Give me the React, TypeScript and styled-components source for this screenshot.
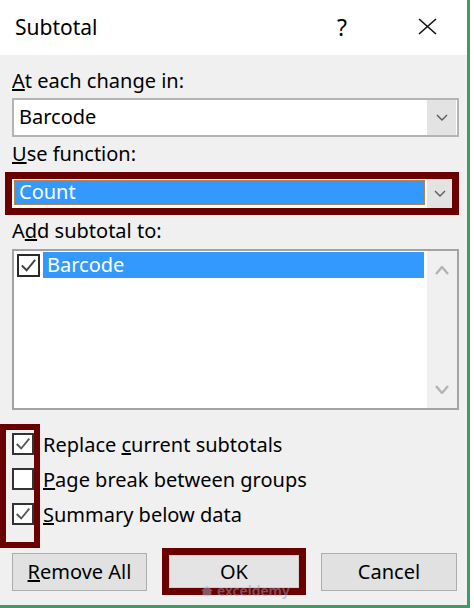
import React from "react"
import styled, { createGlobalStyle } from "styled-components"

const GlobalStyle = createGlobalStyle`
  html, body { margin: 0; padding: 0; background: #fff; }
  body { font-family: "Noto Sans", "Open Sans", sans-serif; color: #000; }
  * { box-sizing: border-box; }
`

const HIGHLIGHT = "#3399ff"
const MARK = "#6b0000"
const TEXT_SIZE = 20

const Chevron = ({ up, color = "#5a5a5a", w = 12, h = 7, sw = 1.4 }: { up?: boolean; color?: string; w?: number; h?: number; sw?: number }) => (
    <svg width={w} height={h} viewBox={`0 0 ${w} ${h}`}>
        <polyline
            points={up ? `1,${h - 1} ${w / 2},1 ${w - 1},${h - 1}` : `1,1 ${w / 2},${h - 1} ${w - 1},1`}
            fill="none"
            stroke={color}
            strokeWidth={sw}
        />
    </svg>
)

const Tick = ({ size, color }: { size: number; color: string }) => (
    <svg width={size} height={size} viewBox="0 0 20 20">
        <polyline points="3,10 8,15 17,4" fill="none" stroke={color} strokeWidth="2" />
    </svg>
)

export default function App() {
    return (
        <>
            <GlobalStyle />
            <Frame>
                <TitleBar>
                    <Title>Subtotal</Title>
                    <HelpButton>?</HelpButton>
                    <CloseButton>
                        <svg width="19" height="17" viewBox="0 0 19 17">
                            <line x1="1" y1="1" x2="18" y2="16" stroke="#111" strokeWidth="1.6" />
                            <line x1="18" y1="1" x2="1" y2="16" stroke="#111" strokeWidth="1.6" />
                        </svg>
                    </CloseButton>
                </TitleBar>
                <Body>
                    <Label>
                        <u>A</u>t each change in:
                    </Label>
                    <Combo>
                        <ComboText>Barcode</ComboText>
                        <DropButton>
                            <Chevron />
                        </DropButton>
                    </Combo>

                    <Label $top={4}>
                        <u>U</u>se function:
                    </Label>
                    <MarkedCombo>
                        <FocusField>Count</FocusField>
                        <DropButton $narrow>
                            <Chevron />
                        </DropButton>
                    </MarkedCombo>

                    <Label $top={3}>
                        A<u>d</u>d subtotal to:
                    </Label>
                    <ListBox>
                        <ListArea>
                            <ListRow>
                                <ListCheck>
                                    <Tick size={19} color="#404040" />
                                </ListCheck>
                                <ListItem>Barcode</ListItem>
                            </ListRow>
                        </ListArea>
                        <ScrollBar>
                            <ScrollArrow>
                                <Chevron up color="#b4b4b4" w={14} h={9} sw={2.4} />
                            </ScrollArrow>
                            <ScrollArrow>
                                <Chevron color="#b4b4b4" w={14} h={9} sw={2.4} />
                            </ScrollArrow>
                        </ScrollBar>
                    </ListBox>

                    <OptionsRow>
                        <MarkedChecks>
                            <OptionCheck>
                                <Tick size={18} color="#555" />
                            </OptionCheck>
                            <OptionCheck />
                            <OptionCheck>
                                <Tick size={18} color="#555" />
                            </OptionCheck>
                        </MarkedChecks>
                        <OptionLabels>
                            <OptionLabel>
                                Replace <u>c</u>urrent subtotals
                            </OptionLabel>
                            <OptionLabel>
                                <u>P</u>age break between groups
                            </OptionLabel>
                            <OptionLabel>
                                <u>S</u>ummary below data
                            </OptionLabel>
                        </OptionLabels>
                    </OptionsRow>

                    <ButtonRow>
                        <Button $width={135}>
                            <u>R</u>emove All
                        </Button>
                        <MarkedButton>
                            <InnerButton>OK</InnerButton>
                        </MarkedButton>
                        <Button $width={136}>Cancel</Button>
                        <Watermark>
                            <svg width="14" height="12" viewBox="0 0 16 14">
                                <polygon points="8,1 15,7 13,7 13,13 3,13 3,7 1,7" fill="#9fb0c8" />
                            </svg>
                            <WatermarkText>exceldemy</WatermarkText>
                        </Watermark>
                    </ButtonRow>
                </Body>
            </Frame>
        </>
    )
}

const Frame = styled.div`
    width: 470px;
    height: 608px;
    display: flex;
    flex-direction: column;
    border-right: 3px solid #3f9d63;
    border-bottom: 3px solid #3f9d63;
    background: #fff;
`
const TitleBar = styled.div`
    height: 55px;
    flex: none;
    display: flex;
    align-items: center;
    padding: 0 16px 2px 15px;
    background: #fff;
`
const Title = styled.div`
    flex: 1;
    font-size: 21px;
    line-height: 30px;
`
const HelpButton = styled.div`
    width: 40px;
    text-align: center;
    font-size: 23px;
    line-height: 30px;
`
const CloseButton = styled.div`
    width: 47px;
    margin-left: 42px;
    display: flex;
    justify-content: center;
    align-items: center;
`
const Body = styled.div`
    flex: 1;
    background: #f0f0f0;
    padding: 13px 8px 0 12px;
    display: flex;
    flex-direction: column;
`
const Label = styled.div<{ $top?: number }>`
    font-size: ${TEXT_SIZE}px;
    line-height: 26px;
    height: 26px;
    margin-top: ${({ $top }) => $top ?? 0}px;
    white-space: nowrap;
`
const Combo = styled.div`
    margin-top: 4px;
    height: 39px;
    display: flex;
    border: 2px solid #b4b4b4;
    background: #fff;
`
const ComboText = styled.div`
    flex: 1;
    padding-left: 5px;
    font-size: ${TEXT_SIZE}px;
    line-height: 34px;
`
const DropButton = styled.div<{ $narrow?: boolean }>`
    width: ${({ $narrow }) => ($narrow ? 25 : 29)}px;
    margin-right: ${({ $narrow }) => ($narrow ? 0 : 1)}px;
    background: #e3e3e3;
    display: flex;
    align-items: center;
    justify-content: center;
`
const MarkedCombo = styled.div`
    margin: 5px 0 0 -7px;
    width: calc(100% + 7px);
    height: 43px;
    border: 7px solid ${MARK};
    background: #fff;
    display: flex;
`
const FocusField = styled.div`
    flex: 1;
    margin: 1px 2px 3px 2px;
    background: ${HIGHLIGHT};
    border: 1px dotted #b98a55;
    color: #fff;
    font-size: ${TEXT_SIZE}px;
    line-height: 22px;
    padding-left: 4px;
`
const ListBox = styled.div`
    margin-top: 5px;
    height: 161px;
    display: flex;
    border: 2px solid #a3a3a3;
    background: #fff;
`
const ListArea = styled.div`
    flex: 1;
    padding: 1px 3px 0 3px;
`
const ListRow = styled.div`
    height: 26px;
    display: flex;
    align-items: center;
`
const ListCheck = styled.div`
    width: 23px;
    height: 23px;
    border: 2px solid #2a2a2a;
    background: #fff;
    display: flex;
    align-items: center;
    justify-content: center;
`
const ListItem = styled.div`
    flex: 1;
    height: 26px;
    margin-left: 3px;
    padding-left: 4px;
    background: ${HIGHLIGHT};
    color: #fff;
    font-size: ${TEXT_SIZE}px;
    line-height: 26px;
`
const ScrollBar = styled.div`
    width: 30px;
    background: #f0f0f0;
    display: flex;
    flex-direction: column;
    justify-content: space-between;
`
const ScrollArrow = styled.div`
    height: 38px;
    display: flex;
    align-items: center;
    justify-content: center;
`
const OptionsRow = styled.div`
    margin: 14px 0 0 -12px;
    display: flex;
`
const MarkedChecks = styled.div`
    width: 40px;
    height: 124px;
    border: 6px solid ${MARK};
    padding: 3px 0 0 6px;
    display: flex;
    flex-direction: column;
    gap: 13px;
`
const OptionCheck = styled.div`
    width: 22px;
    height: 22px;
    border: 2px solid #333;
    background: #fff;
    display: flex;
    align-items: center;
    justify-content: center;
`
const OptionLabels = styled.div`
    padding: 3px 0 0 3px;
    display: flex;
    flex-direction: column;
`
const OptionLabel = styled.div`
    height: 35px;
    display: flex;
    align-items: center;
    font-size: ${TEXT_SIZE}px;
    white-space: pre;
`
const ButtonRow = styled.div`
    position: relative;
    height: 47px;
    display: flex;
    align-items: center;
    gap: 15px;
`
const Button = styled.div<{ $width: number }>`
    width: ${({ $width }) => $width}px;
    height: 38px;
    border: 1px solid #adadad;
    background: #e1e1e1;
    display: flex;
    align-items: center;
    justify-content: center;
    font-size: ${TEXT_SIZE}px;
`
const MarkedButton = styled.div`
    width: 144px;
    height: 47px;
    border: 7px solid ${MARK};
    display: flex;
`
const InnerButton = styled.div`
    flex: 1;
    border: 1px solid #d0d0d0;
    background: #e4e4e4;
    display: flex;
    align-items: center;
    justify-content: center;
    font-size: ${TEXT_SIZE}px;
    line-height: 22px;
`
const Watermark = styled.div`
    position: absolute;
    left: 188px;
    top: 37px;
    display: flex;
    align-items: center;
    gap: 3px;
    opacity: 0.5;
    pointer-events: none;
`
const WatermarkText = styled.div`
    color: #8ea2c0;
    font-size: 14px;
    line-height: 10px;
    font-weight: 600;
`
